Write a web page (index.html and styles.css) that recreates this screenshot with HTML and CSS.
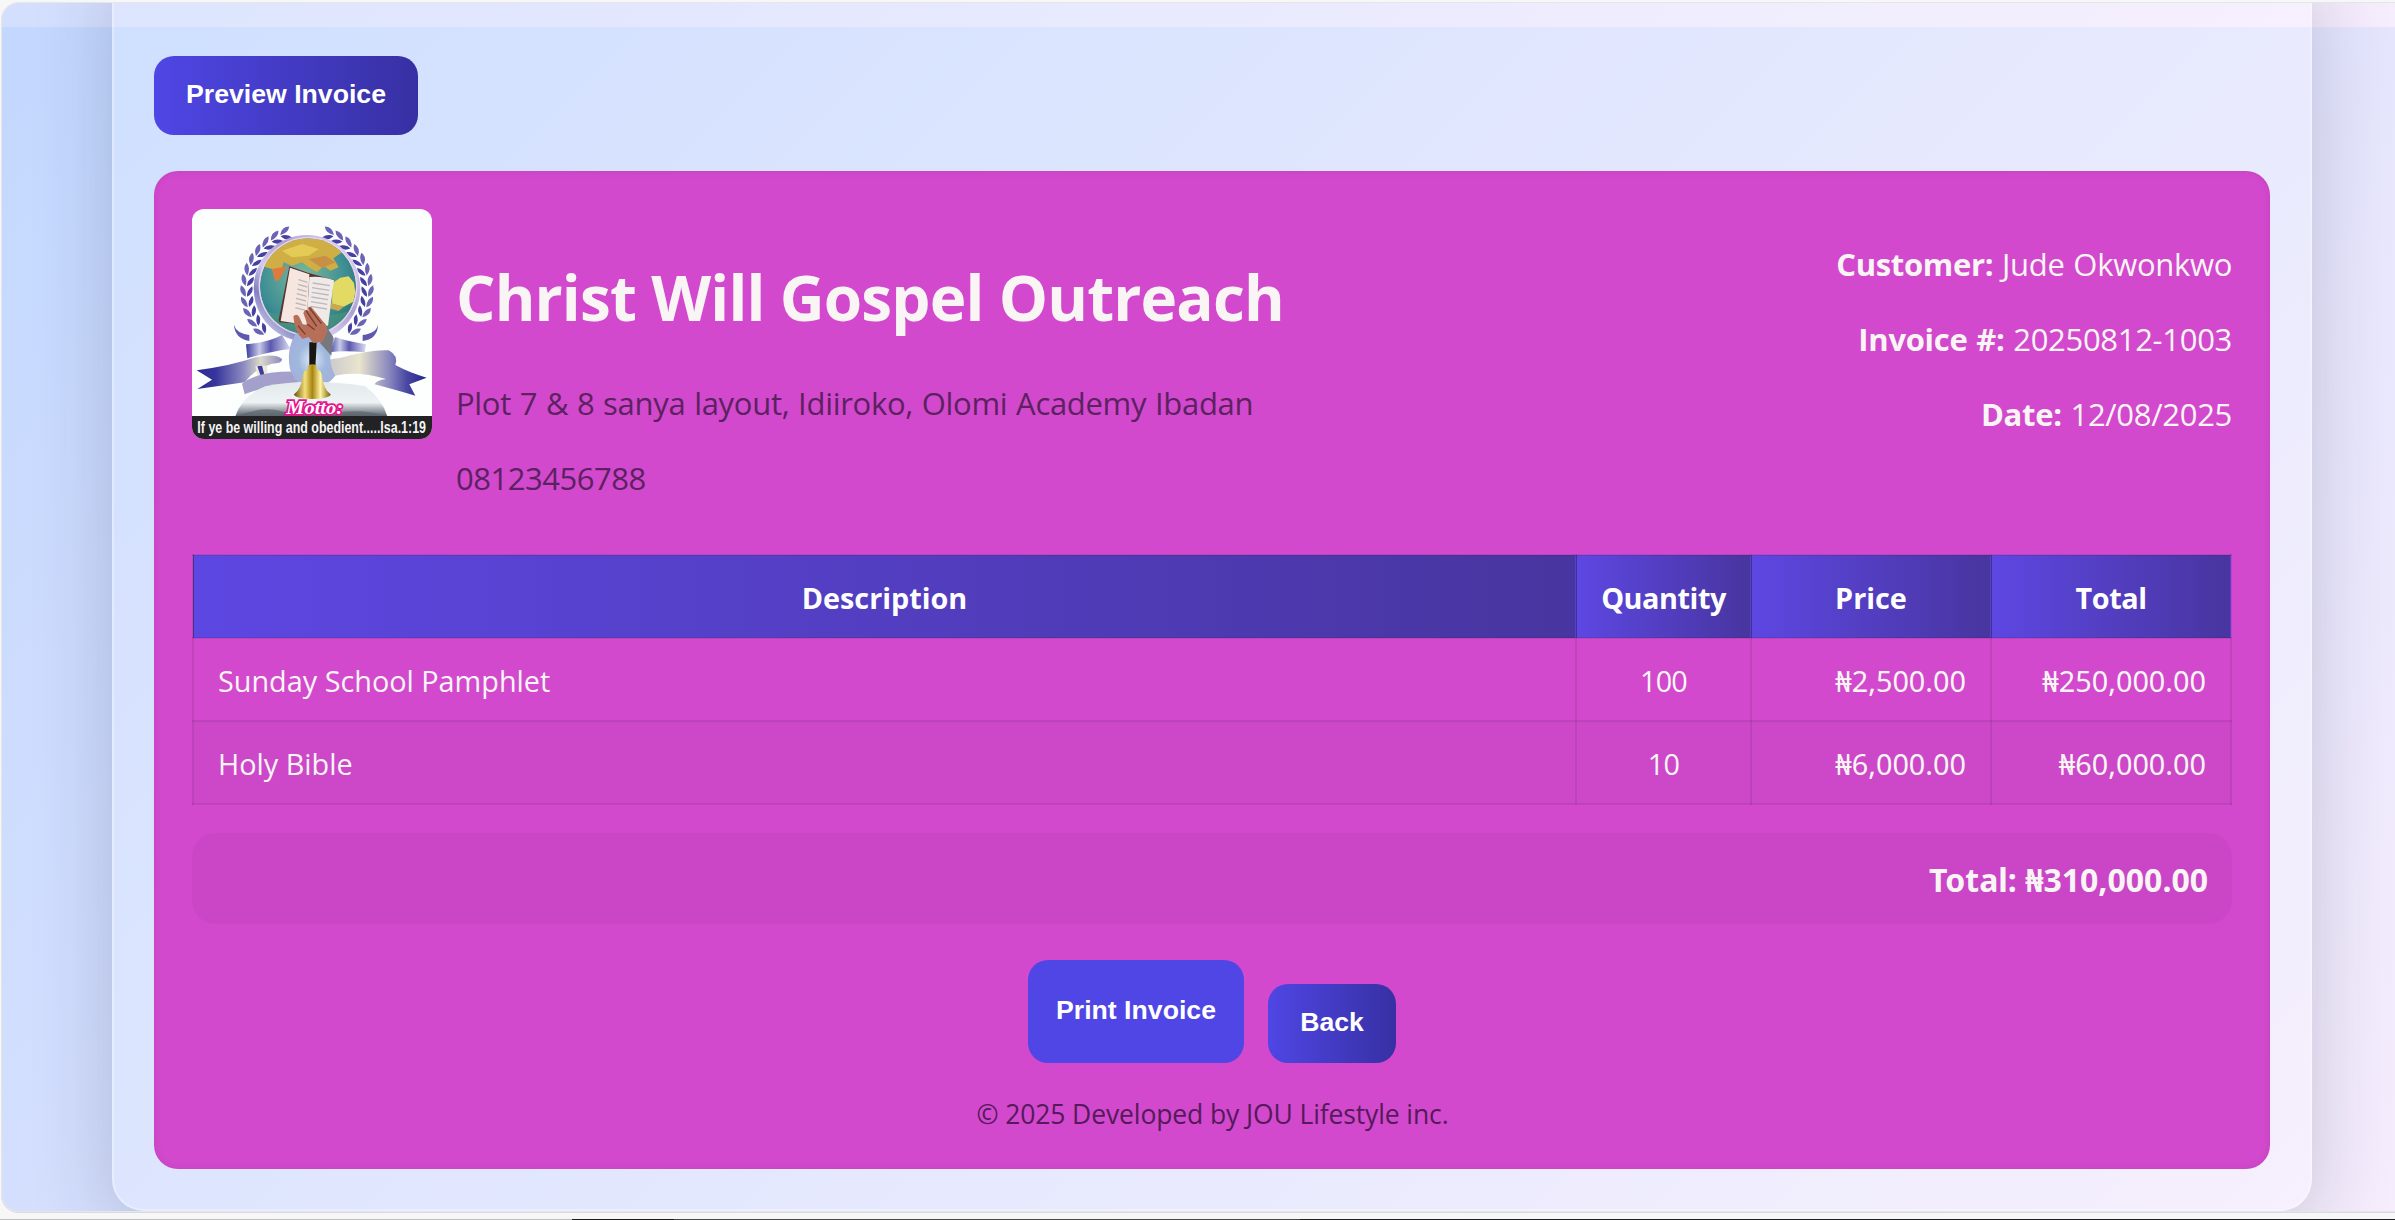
FILE: index.html
```
<!DOCTYPE html>
<html lang="en">
<head>
<meta charset="utf-8">
<title>Invoice</title>
<link rel="stylesheet" href="styles.css">
</head>
<body>
<div class="page">
  <main class="panel">
    <button class="btn btn-gradient btn-preview">Preview Invoice</button>

    <section class="invoice">
      <header class="invoice-header">
        <svg class="logo" viewBox="0 0 720 690" role="img" aria-label="Christ Will Gospel Outreach logo">
          <defs>
            <linearGradient id="ribbon" x1="0" x2="1"><stop offset="0" stop-color="#2b2b93"/><stop offset=".22" stop-color="#35359c"/><stop offset=".55" stop-color="#8d8bc0"/><stop offset=".75" stop-color="#dddacb"/><stop offset="1" stop-color="#8a87c0"/></linearGradient>
            <linearGradient id="ribbonR" x1="0" x2="1"><stop offset="0" stop-color="#a9a6cc"/><stop offset=".5" stop-color="#e9e5cd"/><stop offset=".72" stop-color="#8a88be"/><stop offset=".85" stop-color="#4a48a3"/><stop offset="1" stop-color="#24248c"/></linearGradient>
            <linearGradient id="bow" x1="0" x2="1"><stop offset="0" stop-color="#3a3a9e"/><stop offset=".3" stop-color="#c9c9ea"/><stop offset=".55" stop-color="#5a58ae"/><stop offset="1" stop-color="#dcdcf2"/></linearGradient>
            <linearGradient id="ring" x1="0" y1="1" x2="1" y2="0"><stop offset="0" stop-color="#fff"/><stop offset=".25" stop-color="#8280c4"/><stop offset=".4" stop-color="#d4caec"/><stop offset=".6" stop-color="#b09fd4"/><stop offset="1" stop-color="#efe6f8"/></linearGradient>
            <radialGradient id="sea" cx=".45" cy=".4" r=".65"><stop offset="0" stop-color="#7fb89a"/><stop offset=".7" stop-color="#3b8d94"/><stop offset="1" stop-color="#2c6f6c"/></radialGradient>
            <linearGradient id="bell" x1="0" x2="1"><stop offset="0" stop-color="#6b5208"/><stop offset=".3" stop-color="#f4e07a"/><stop offset=".5" stop-color="#a88410"/><stop offset=".72" stop-color="#fff2a0"/><stop offset="1" stop-color="#77600c"/></linearGradient>
            <linearGradient id="stone" x1="0" y1="0" x2="0" y2="1"><stop offset="0" stop-color="#e3e9ec"/><stop offset=".6" stop-color="#eef2f4"/><stop offset="1" stop-color="#56606a"/></linearGradient>
            <radialGradient id="robe"><stop offset="0" stop-color="#dfeaf6"/><stop offset=".6" stop-color="#9fb8dd"/><stop offset="1" stop-color="#a3b1dc"/></radialGradient>
            <clipPath id="globeClip"><circle cx="348" cy="232" r="144"/></clipPath>
            <g id="leaf">
              <path d="M329 46Q342 24 364 32Q354 50 329 46Z" fill="#6b64b4"/>
              <path d="M329 50Q348 48 360 66Q340 72 329 50Z" fill="#4640a0"/>
            </g>
            <g id="laurel">
              <use href="#leaf" transform="rotate(-21 345 230)"/><use href="#leaf" transform="rotate(-31 345 230)"/>
              <use href="#leaf" transform="rotate(-41 345 230)"/><use href="#leaf" transform="rotate(-51 345 230)"/>
              <use href="#leaf" transform="rotate(-61 345 230)"/><use href="#leaf" transform="rotate(-71 345 230)"/>
              <use href="#leaf" transform="rotate(-81 345 230)"/><use href="#leaf" transform="rotate(-91 345 230)"/>
              <use href="#leaf" transform="rotate(-101 345 230)"/><use href="#leaf" transform="rotate(-111 345 230)"/>
              <use href="#leaf" transform="rotate(-121 345 230)"/><use href="#leaf" transform="rotate(-131 345 230)"/>
            </g>
          </defs>
          <rect width="720" height="690" fill="#fdffff"/>
          <g transform="translate(0 14)">
            <use href="#laurel"/>
            <use href="#laurel" transform="translate(690 0) scale(-1 1)"/>
          </g>
          <!-- globe -->
          <circle cx="345" cy="238" r="160" fill="url(#ring)"/>
          <circle cx="348" cy="232" r="148" fill="#e4d6ee"/>
          <g clip-path="url(#globeClip)">
            <circle cx="348" cy="232" r="144" fill="url(#sea)"/>
            <path d="M215 150Q260 95 340 88L400 92L450 130L424 148L440 175L415 185L395 170L375 190L350 175L330 160L300 170L275 160L262 200L250 215L240 180L205 170Z" fill="#cfae45"/>
            <path d="M240 180L285 172L262 212L250 216Z" fill="#e07a3c"/>
            <path d="M270 125L330 105L380 120L350 140L300 145Z" fill="#e3cb55"/>
            <path d="M350 150L400 140L430 160L390 178Z" fill="#c99045"/>
            <path d="M422 222L445 206L470 202L486 222L490 250L484 278L455 293L420 285Z" fill="#e2da62"/>
            <path d="M418 282L455 293L440 306L412 298Z" fill="#c8a850"/>
            <path d="M205 300Q340 350 490 300L480 400H220Z" fill="#4c9a82" opacity=".6"/>
          </g>
          <!-- ribbons -->
          <path d="M126 347Q132 372 172 378V396Q128 388 126 347Z" fill="#5d59ad"/>
          <path d="M558 345Q556 372 512 378V396Q558 390 558 345Z" fill="#5d59ad"/>
          <path d="M162 406Q230 400 270 378L296 420Q240 426 166 448Z" fill="url(#bow)"/>
          <path d="M522 406Q460 396 430 384L410 430Q460 424 518 430Z" fill="url(#bow)"/>
          <path d="M14 484Q120 470 190 445Q250 432 270 450Q272 464 240 464Q190 478 158 520Q90 530 16 540L60 512Z" fill="url(#ribbon)"/>
          <path d="M190 470H226V500H196Z" fill="#ece9d8"/><path d="M196 472L206 500H218L210 470Z" fill="#3b3ba0"/>
          <path d="M150 524Q200 484 320 488V522Q220 530 158 556Z" fill="#a3a0cb"/>
          <path d="M300 512Q380 452 440 448Q540 420 590 424Q620 440 610 468Q650 490 704 506L652 526L670 560Q600 540 548 526Q552 514 582 510Q480 480 400 508Z" fill="url(#ribbonR)"/>
          <!-- robe, stone and bell -->
          <path d="M312 372L430 388Q400 450 430 500Q400 540 360 530Q310 530 294 480Q282 420 312 372Z" fill="url(#robe)"/>
          <path d="M408 360L424 384L418 440L384 402Z" fill="#77777f"/>
          <path d="M130 622Q150 560 220 532Q350 505 520 532Q570 570 586 622Z" fill="url(#stone)"/>
          <path d="M130 622Q240 580 300 622ZM440 610Q520 600 586 622H440Z" fill="#5c666b" opacity=".7"/>
          <path d="M352 400H374L370 478H352Z" fill="#191512"/>
          <path d="M348 470Q361 462 374 470V480Q388 484 390 500Q394 540 416 556Q416 568 361 570Q306 568 306 556Q328 540 332 500Q334 484 348 480Z" fill="url(#bell)"/>
          <!-- open book held in hand -->
          <path d="M292 172L350 192L424 212L414 300L402 352L262 340L260 332Z" fill="#5a3230"/>
          <path d="M294 176L352 196L344 348L266 336Z" fill="#f6e6e0"/>
          <path d="M352 204Q390 200 426 214L408 350L344 346Z" fill="#efeae8"/>
          <path d="M320 212L346 220M318 226L346 234M316 240L344 248M314 254L344 262M312 268L342 276M311 282L342 290M310 296L340 304M362 222L414 230M360 236L412 244M359 250L410 258M358 264L408 272M357 278L406 286M356 292L405 300" stroke="#bdb8ba" stroke-width="4" fill="none"/>
          <path d="M304 322Q314 312 322 324L334 350L346 346L334 312Q338 298 350 306Q344 290 358 294L392 336Q410 352 404 372L392 398L364 402L350 384L332 390Q308 372 304 322Z" fill="#b86f5a"/>
          <path d="M342 304L374 352M352 296L388 344M318 350L340 376M346 346L368 362" stroke="#7a3a2c" stroke-width="4" fill="none"/>
          <rect y="621" width="720" height="69" fill="#222224"/>
          <text class="logo-script" x="283" y="615" textLength="170" lengthAdjust="spacingAndGlyphs">Motto:</text>
          <text class="logo-caption" x="16" y="671" textLength="686" lengthAdjust="spacingAndGlyphs">If ye be willing and obedient.....Isa.1:19</text>
        </svg>
        <div class="org">
          <h1>Christ Will Gospel Outreach</h1>
          <p class="address">Plot 7 &amp; 8 sanya layout, Idiiroko, Olomi Academy Ibadan</p>
          <p class="phone">08123456788</p>
        </div>
        <div class="meta">
          <p><strong>Customer:</strong> Jude Okwonkwo</p>
          <p><strong>Invoice #:</strong> 20250812-1003</p>
          <p><strong>Date:</strong> 12/08/2025</p>
        </div>
      </header>

      <table class="items">
        <colgroup><col class="col-desc"><col class="col-qty"><col class="col-price"><col class="col-total"></colgroup>
        <thead>
          <tr><th>Description</th><th class="tight">Quantity</th><th>Price</th><th class="tight">Total</th></tr>
        </thead>
        <tbody>
          <tr><td>Sunday School Pamphlet</td><td class="qty">100</td><td class="amount">₦2,500.00</td><td class="amount">₦250,000.00</td></tr>
          <tr><td>Holy Bible</td><td class="qty">10</td><td class="amount">₦6,000.00</td><td class="amount">₦60,000.00</td></tr>
        </tbody>
      </table>

      <div class="grand-total">Total: ₦310,000.00</div>

      <div class="actions">
        <button class="btn btn-print">Print Invoice</button>
        <button class="btn btn-gradient btn-back">Back</button>
      </div>

      <footer class="credit">© 2025 Developed by JOU Lifestyle inc.</footer>
    </section>
  </main>
</div>
<div class="edge"></div>
</body>
</html>
```
FILE: styles.css
```
* { box-sizing: border-box; }

body {
  margin: 0;
  height: 1220px;
  padding: 3px 0 0 2px;
  display: flex;
  flex-direction: column;
  justify-content: space-between;
  overflow: hidden;
  background: #f7f7f7;
  font-family: "Open Sans", "Noto Sans", sans-serif;
  font-size: 31px;
  line-height: 43px;
  color: #f9f5f5;
}

.page {
  height: 1208px;
  padding: 0 83px 0 110px;
  overflow: hidden;
  border-radius: 17px 0 0 17px;
  box-shadow: 0 0 0 1px #e6e6e8, 0 1px 0 1px #d9d9e0;
  background: linear-gradient(135deg, #c3d8ff, #f6edfd) 0 24px / 100% 1190px;
}

.panel {
  height: 1248px;
  margin-top: -40px;
  padding: 91px 40px 0;
  border: 2px solid rgba(255, 255, 255, .3);
  border-radius: 32px;
  background: rgba(255, 255, 255, .19);
  box-shadow: 0 16px 80px rgba(31, 38, 70, .21);
}

.btn {
  display: block;
  border: 0;
  border-radius: 20px;
  padding: 0 0 3px;
  font: bold 26.67px/30px "Liberation Sans", Arial, sans-serif;
  color: #fff;
}
.btn-gradient { background: linear-gradient(90deg, #4f46e5, #3730a3); }
.btn-preview { width: 264px; height: 79px; margin-bottom: 36px; }
.btn-print { width: 216px; height: 103px; background: #4f46e5; }
.btn-back { width: 128px; height: 79px; }

.invoice {
  height: 998px;
  padding: 38px;
  border-radius: 24px;
  background: #d249cd;
  box-shadow: inset 0 0 8px rgba(0, 0, 0, .08);
}

.invoice-header {
  display: flex;
  height: 345px;
}

.logo {
  width: 240px;
  height: 230px;
  margin-right: 24px;
  border-radius: 12px;
}
.logo-script {
  font: italic bold 58px "Liberation Serif", serif;
  fill: #fff;
  stroke: #e5148c;
  stroke-width: 10px;
  paint-order: stroke;
}
.logo-caption {
  font: bold 50px "Liberation Sans", Arial, sans-serif;
  fill: #f4f4f4;
}

.org { flex: 1; padding-top: 44px; }
.org h1 {
  margin: 0 0 40px;
  font-size: 62px;
  line-height: 89px;
  letter-spacing: -.85px;
}
.org p { margin: 0 0 32px; color: #5c2161; }
.address { letter-spacing: -.3px; word-spacing: 1px; }
.phone { letter-spacing: -.48px; }

.meta {
  padding-top: 34px;
  text-align: right;
  letter-spacing: -.3px;
  word-spacing: 1px;
}
.meta strong { letter-spacing: -.3px; }
.meta p { margin: 0 0 32px; }

.items {
  width: 2038px;
  table-layout: fixed;
  border-collapse: collapse;
  font-size: 28.8px;
  line-height: 39px;
}
.items tr { height: 83px; }
.items th, .items td {
  padding: 2px 24px 0;
  border: 2px solid rgba(0, 0, 0, .08);
  text-align: left;
}
.items th {
  padding: 2px 0 0;
  text-align: center;
  color: #fff;
  letter-spacing: 0;
  background: linear-gradient(90deg, #5d47e2, #48359f);
}
.items th.tight { letter-spacing: -.45px; }
.items tbody tr:nth-child(even) { background: #cc48c9; }
.items td.qty { padding: 2px 0 0; text-align: center; letter-spacing: -.8px; }
.items .amount { text-align: right; font-family: "Noto Sans", sans-serif; }
.col-desc { width: 1383px; }
.col-qty { width: 175px; }
.col-price { width: 240px; }
.col-total { width: 240px; }

.grand-total {
  height: 91px;
  margin-top: 28px;
  padding: 25px 24px 0;
  border-radius: 24px;
  background: #ca46c7;
  font-family: "Noto Sans", sans-serif;
  font-size: 32px;
  font-weight: bold;
  text-align: right;
}

.actions {
  display: flex;
  justify-content: center;
  align-items: flex-end;
  gap: 24px;
  margin-top: 36px;
}

.credit {
  margin-top: 33px;
  padding-left: 1px;
  font-size: 26.5px;
  line-height: 37px;
  letter-spacing: -.12px;
  text-align: center;
  color: #541a5a;
}

/* thin strip along the bottom of the window */
.edge {
  height: 1px;
  margin-left: -2px;
  background: linear-gradient(90deg, #bdbdbd 572px, #1a1a1a 572px 674px, #484848 674px 1300px, #1f1f22 1300px);
}
```
